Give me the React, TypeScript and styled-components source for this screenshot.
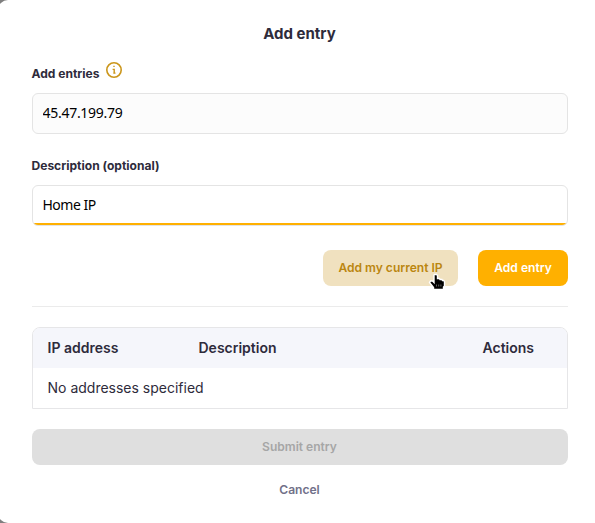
import React from "react";
import styled, { createGlobalStyle } from "styled-components";

const GlobalStyle = createGlobalStyle`
  * { box-sizing: border-box; }
  body { margin: 0; background: #7f7f7f; font-family: Inter, sans-serif; color: #2e2b3b; overflow: hidden; }
`;

const Modal = styled.main`
  height: 523px;
  margin-left: -2px;
  padding: 24px 27px 0 34px;
  background: #fff;
  border-radius: 10px 0 0 10px;
`;

const Title = styled.h1`
  margin: 0;
  height: 20px;
  padding-right: 1px;
  font-size: 15px;
  font-weight: 700;
  line-height: 20px;
  text-align: center;
`;

const Field = styled.label<{ $gap: number }>`
  display: block;
  margin-top: ${(p) => p.$gap}px;
`;

const LabelRow = styled.span`
  display: flex;
  height: 16px;
  gap: 5px;
  margin-left: -0.5px;
  font-size: 12.05px;
  font-weight: 700;
  line-height: 18px;
`;

const InfoIcon = styled.svg`
  width: 18px;
  height: 18px;
  margin-top: -4px;
`;

const Input = styled.input<{ $active?: boolean; $tracking: number }>`
  display: block;
  width: 100%;
  height: 41px;
  margin-top: 12px;
  padding: 0 9.5px 2px;
  border: 1px solid #e4e4e4;
  border-radius: 6px;
  outline: none;
  color: #000;
  background: ${(p) =>
    p.$active ? "linear-gradient(#ffb000, #ffb000) 0 100% / 100% 2px no-repeat #fff" : "#fcfcfc"};
  font-family: "Noto Sans", sans-serif;
  font-size: 14px;
  letter-spacing: ${(p) => p.$tracking}px;
`;

const ButtonRow = styled.div`
  display: flex;
  justify-content: flex-end;
  gap: 20px;
  margin-top: 24px;
  padding-bottom: 20px;
  border-bottom: 1px solid #ebebeb;
`;

const tones = {
  soft: ["#f0e1bf", "#bb860f"],
  primary: ["#ffb000", "#fff"],
  disabled: ["#dfdfdf", "#a6a6a6"],
  plain: ["transparent", "#717189"],
};

const Button = styled.button<{ $tone: keyof typeof tones; $width?: string }>`
  position: relative;
  display: block;
  width: ${(p) => p.$width ?? "100%"};
  height: 36px;
  padding: 0 ${(p) => (p.$width ? 0 : 1)}px 1px 0;
  border: 0;
  border-radius: 8px;
  background: ${(p) => tones[p.$tone][0]};
  color: ${(p) => tones[p.$tone][1]};
  font-family: inherit;
  font-size: 12.05px;
  font-weight: 600;
`;

const Pointer = styled.svg`
  position: absolute;
  left: 105px;
  top: 23px;
  width: 18px;
  height: 18px;
`;

const Table = styled.section`
  margin: 20px 0;
  border: 1px solid #e6e6e8;
  border-radius: 8px 8px 0 0;
  overflow: hidden;
`;

const Row = styled.div<{ $head?: boolean }>`
  display: grid;
  grid-template-columns: 151px 1fr 70px;
  height: 40px;
  align-items: center;
  padding: 0 14.5px 2px;
  background: ${(p) => (p.$head ? "#f5f6fb" : "#fff")};
  font-size: 14px;
  font-weight: ${(p) => (p.$head ? 600 : 400)};
`;

const Cell = styled.span`
  white-space: nowrap;
`;

const Footer = styled.footer`
  display: grid;
  gap: 7px;
`;

export default function App() {
  return (
    <>
      <GlobalStyle />
      <Modal>
        <Title>Add entry</Title>
        <Field $gap={21}>
          <LabelRow>
            Add entries
            <InfoIcon viewBox="0 0 18 18" fill="none" stroke="#cb961b" strokeWidth="1.6">
              <circle cx="9" cy="9" r="7.2" />
              <path d="M9 4.8v1.3M7.6 8.4H9.2v3.9M8.3 12.1h2.2" strokeWidth="1.4" />
            </InfoIcon>
          </LabelRow>
          <Input readOnly $tracking={-0.28} value="45.47.199.79" />
        </Field>
        <Field $gap={23}>
          <LabelRow>Description (optional)</LabelRow>
          <Input readOnly $active $tracking={-0.5} value="Home IP" />
        </Field>
        <ButtonRow>
          <Button $tone="soft" $width="135px">
            Add my current IP
            <Pointer viewBox="0 0 18 18">
              <path
                d="M6.5 1.5H8.5L9.5 2.5V5.5H11.5L12 6.5H14L14.5 7.5H15.5L16.5 8.5V13L15.5 14V16.5H5.5V14.5L3.5 12L1.5 9.5L2.5 8H4.5L6 9.5V2Z"
                fill="#000"
                stroke="#fff"
                strokeWidth="1.4"
              />
              <path d="M8.5 11.5v2M10.7 11.5v2M12.9 11.5v2" stroke="#777" strokeWidth=".8" />
            </Pointer>
          </Button>
          <Button $tone="primary" $width="90px">Add entry</Button>
        </ButtonRow>
        <Table>
          <Row $head>
            <Cell>IP address</Cell>
            <Cell>Description</Cell>
            <Cell>Actions</Cell>
          </Row>
          <Row>
            <Cell>No addresses specified</Cell>
          </Row>
        </Table>
        <Footer>
          <Button $tone="disabled">Submit entry</Button>
          <Button $tone="plain">Cancel</Button>
        </Footer>
      </Modal>
    </>
  );
}
